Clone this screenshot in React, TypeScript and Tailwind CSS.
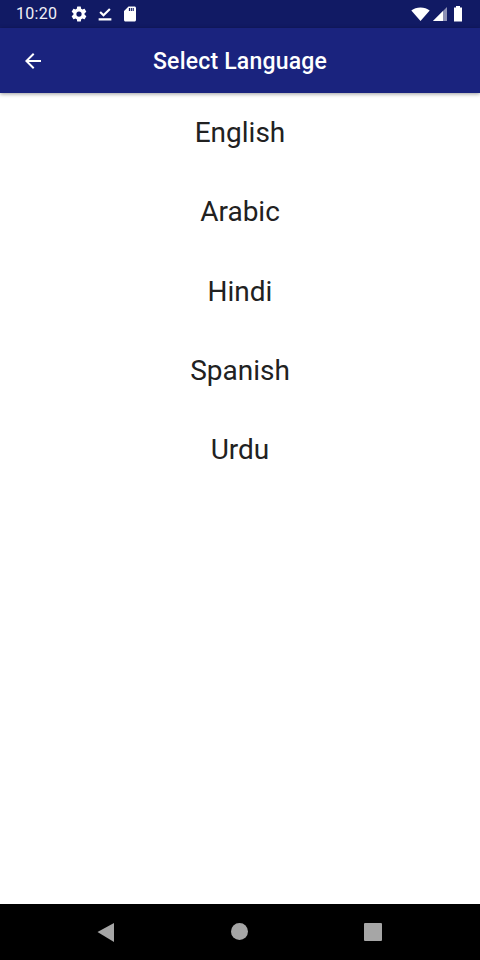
import React from "react";

const langs = ["English", "Arabic", "Hindi", "Spanish", "Urdu"];

export default function App() {
  return (
    <div className="flex h-[960px] w-[480px] flex-col overflow-hidden bg-white font-['Roboto',sans-serif]">
      <div className="flex h-[28px] shrink-0 items-center bg-[#111a64] pl-[16px] pr-[16px] text-white">
        <span className="text-[16px] leading-none tracking-[0.3px] text-[#f0f0f6]">10:20</span>
        <svg className="ml-[13px]" width="18" height="18" viewBox="0 0 24 24" fill="#fff">
          <path d="M19.4 13c.04-.3.06-.65.06-1s-.02-.7-.07-1l2.1-1.65c.2-.15.24-.42.12-.64l-2-3.46c-.12-.22-.38-.3-.6-.22l-2.5 1c-.52-.4-1.08-.73-1.7-.98l-.37-2.65A.5.5 0 0 0 14 2h-4a.5.5 0 0 0-.5.42l-.37 2.65c-.6.25-1.17.59-1.69.98l-2.49-1a.49.49 0 0 0-.6.22l-2 3.46c-.13.22-.07.49.12.64L4.57 11c-.05.3-.07.66-.07 1s.02.7.07 1l-2.1 1.65c-.2.15-.25.42-.13.64l2 3.46c.12.22.38.3.6.22l2.5-1c.52.4 1.08.73 1.69.98l.38 2.65c.05.24.25.42.49.42h4c.25 0 .45-.18.49-.42l.38-2.65c.6-.25 1.17-.58 1.69-.98l2.49 1c.23.08.49 0 .6-.22l2-3.46c.12-.22.07-.49-.12-.64L19.4 13zM12 15.5a3.5 3.5 0 1 1 0-7 3.5 3.5 0 0 1 0 7z" />
        </svg>
        <svg className="ml-[8px]" width="18" height="18" viewBox="0 0 24 24" fill="#fff">
          <path d="M3.500 17.500h17v3h-17zM10 15.800l-5.500-5.500 2-2 3.500 3.500 7.500-7.600 2 2z" />
        </svg>
        <svg className="ml-[7px]" width="18" height="18" viewBox="0 0 24 24" fill="#fff">
          <path d="M18 2h-8L4 8v12c0 1.100.9 2 2 2h12c1.100 0 2-.9 2-2V4c0-1.100-.9-2-2-2zm-6 6h-1.500V4H12v4zm2.500 0H13V4h1.500v4zm2.500 0h-1.500V4H17v4z" />
        </svg>
        <div className="ml-auto flex items-center">
          <svg width="20" height="18" viewBox="0 0 20 18" fill="#fff">
            <path d="M0.300 5.500C2.800 3.500 6 2.400 9.500 2.400s6.700 1.100 9.200 3.100L9.500 16z" />
          </svg>
          <svg className="ml-[1px]" width="16" height="16" viewBox="0 0 16 16">
            <path d="M1 15L15 1v14z" fill="#8c8fb4" />
            <path d="M1 15L11 5v10z" fill="#fff" />
          </svg>
          <svg className="ml-[4px]" width="12" height="18" viewBox="0 0 12 18" fill="#fff">
            <path d="M4 1h4v1.500h2V16.500H2V2.500h2z" />
          </svg>
        </div>
      </div>
      <div className="z-10 flex h-[65px] shrink-0 items-center bg-[#1a237e] shadow-[0_1px_4px_rgba(0,0,0,0.4)]">
        <div className="flex w-[66px] justify-center">
          <svg width="24" height="24" viewBox="0 0 24 24" fill="#fff">
            <path d="M20 11H7.830l5.590-5.590L12 4l-8 8 8 8 1.410-1.410L7.830 13H20z" />
          </svg>
        </div>
        <div className="flex-1 pr-[66px] pt-[2px] text-center text-[23px] font-medium leading-none tracking-[0.2px] text-white">Select Language</div>
      </div>
      <div className="flex flex-1 flex-col pt-[14px]">
        {langs.map((l) => (
          <div key={l} className="flex h-[79.300px] items-start justify-center pt-[10px] text-[28px] leading-[32px] text-[#212121]">
            {l}
          </div>
        ))}
      </div>
      <div className="flex h-[56px] shrink-0 items-center bg-black">
        <div className="relative h-full w-full">
          <svg className="absolute left-[96px] top-[17px]" width="20" height="22" viewBox="0 0 20 22" fill="#a6a6a6">
            <path d="M1.500 11L18 2v19z" />
          </svg>
          <div className="absolute left-[231px] top-[19px] h-[17px] w-[17px] rounded-full bg-[#a6a6a6]" />
          <div className="absolute left-[364px] top-[19px] h-[18px] w-[18px] rounded-[1px] bg-[#a6a6a6]" />
        </div>
      </div>
    </div>
  );
}
